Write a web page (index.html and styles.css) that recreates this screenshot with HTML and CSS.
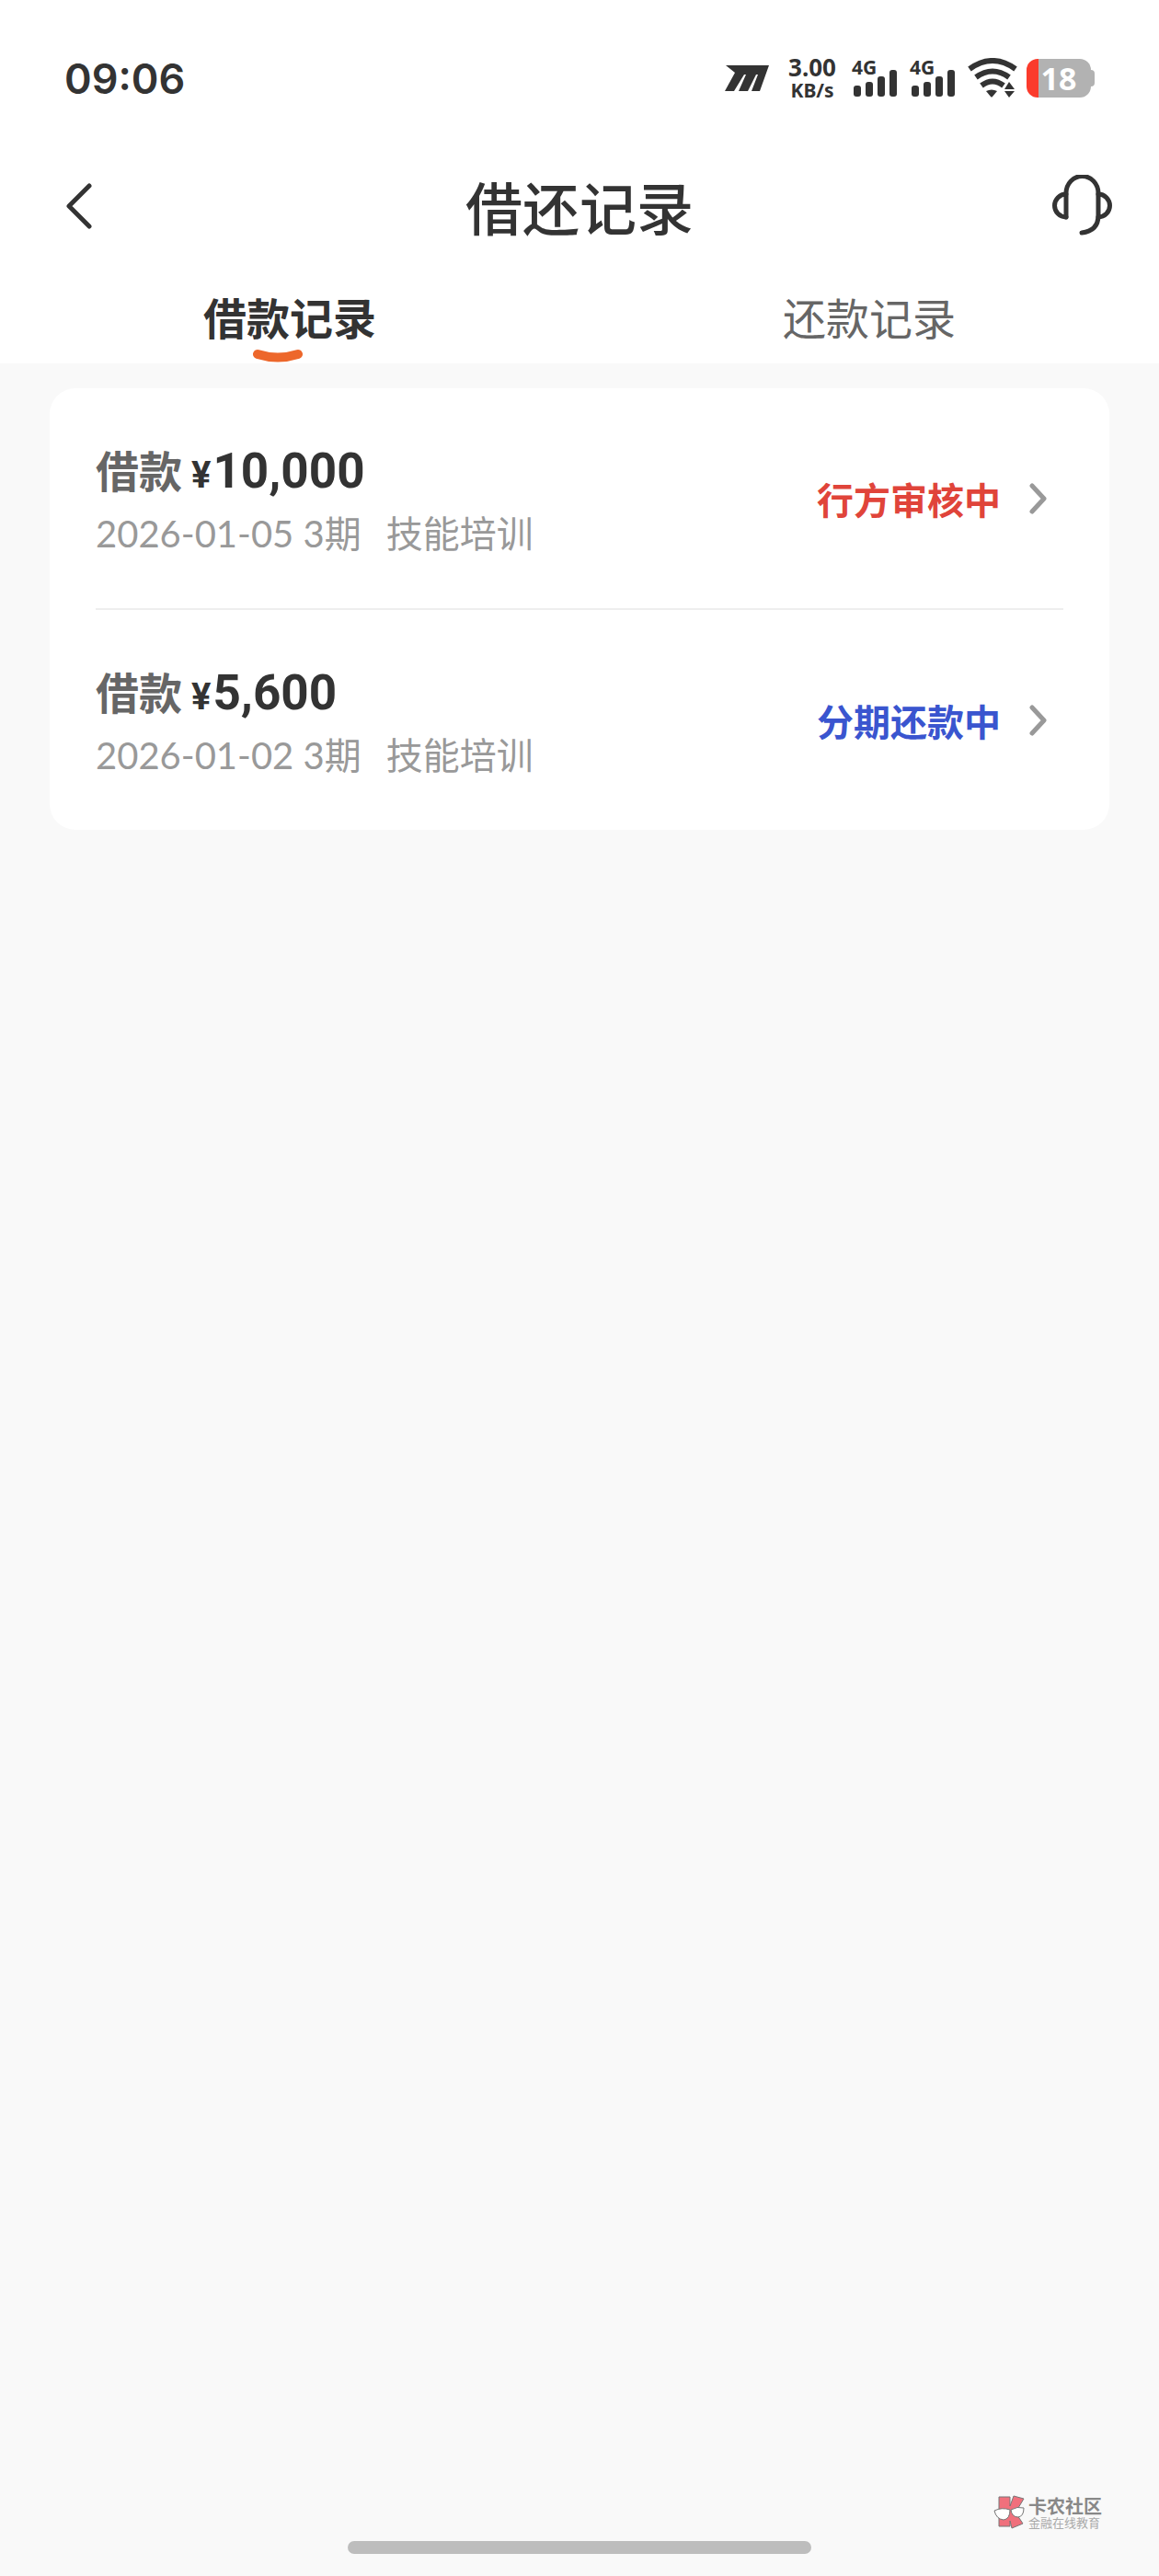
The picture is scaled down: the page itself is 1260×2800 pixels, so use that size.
FILE: index.html
```html
<!DOCTYPE html>
<html lang="zh-CN">
<head>
    <meta charset="UTF-8">
    <meta name="viewport" content="width=device-width, initial-scale=1">
    <title>借还记录</title>
    <link rel="stylesheet" href="styles.css">
</head>
<body>

    <header class="top">
        <div class="status-bar">
            <time class="clock">09:06</time>
            <div class="status-icons">
                <svg class="icon-m" width="50" height="30" viewBox="0 0 50 30">
                    <path d="M2 1H49L39 29H30L37 11H35L26 29H16L24 11H22L11 29H1L12 9Z" fill="#333"/>
                </svg>
                <div class="speed">
                    <span class="speed-num">3.00</span>
                    <span class="speed-unit">KB/s</span>
                </div>
                <div class="signal">
                    <span class="signal-type">4G</span>
                    <svg width="50" height="44" viewBox="0 0 50 44" fill="#333">
                        <rect x="2" y="30" width="8" height="12" rx="3"/>
                        <rect x="15" y="26" width="8" height="16" rx="3"/>
                        <rect x="28" y="20" width="8" height="22" rx="3"/>
                        <rect x="41" y="13" width="8" height="29" rx="3"/>
                    </svg>
                </div>
                <div class="signal">
                    <span class="signal-type">4G</span>
                    <svg width="50" height="44" viewBox="0 0 50 44" fill="#333">
                        <rect x="2" y="30" width="8" height="12" rx="3"/>
                        <rect x="15" y="26" width="8" height="16" rx="3"/>
                        <rect x="28" y="20" width="8" height="22" rx="3"/>
                        <rect x="41" y="13" width="8" height="29" rx="3"/>
                    </svg>
                </div>
                <svg class="icon-wifi" width="54" height="44" viewBox="0 0 54 44">
                    <g fill="none" stroke="#333" stroke-width="6">
                        <path d="M2 12Q27 -6 52 12"/>
                        <path d="M9 21Q27 8 45 21"/>
                        <path d="M15 30Q27 21 39 30"/>
                    </g>
                    <path d="M20 36Q26 33 32 36L27 42Q26 43 25 42Z" fill="#333"/>
                    <path d="M40 34L45 26L51 34ZM40 36H51L45 43Z" fill="#333"/>
                </svg>
                <div class="battery">
                    <span class="battery-body">18</span>
                    <span class="battery-tip"></span>
                </div>
            </div>
        </div>

        <div class="nav-bar">
            <button type="button" class="nav-btn nav-btn-left" aria-label="返回">
                <svg width="30" height="50" viewBox="0 0 30 50">
                    <path d="M27 3L5 25L27 47" fill="none" stroke="#333" stroke-width="5" stroke-linecap="round" stroke-linejoin="round"/>
                </svg>
            </button>
            <h1>借还记录</h1>
            <button type="button" class="nav-btn nav-btn-right" aria-label="客服">
                <svg width="68" height="68" viewBox="0 0 68 68">
                    <g fill="none" stroke="#333" stroke-width="5" stroke-linecap="round" stroke-linejoin="round">
                        <path d="M17 46V20A17 18 0 0 1 52 20V44Q52 61 34 63"/>
                        <path d="M17 21A12 12 0 0 0 17 46"/>
                        <path d="M52 21A12 12 0 0 1 52 46"/>
                    </g>
                </svg>
            </button>
        </div>

        <nav class="tabs">
            <a href="#loans" class="tab active" aria-current="page">借款记录
                <svg class="tab-mark" width="56" height="16" viewBox="0 0 56 16">
                    <path d="M6 6Q28 13 50 6" fill="none" stroke="#ed672b" stroke-width="10" stroke-linecap="round"/>
                </svg>
            </a>
            <a href="#repayments" class="tab">还款记录</a>
        </nav>
    </header>

    <main id="loans" class="card">
        <a href="#loan-1" class="row">
            <div class="info">
                <div class="line"><span class="label">借款</span><span class="yen">¥</span><span class="amount">10,000</span></div>
                <div class="detail"><span>2026-01-05 3期</span><span>技能培训</span></div>
            </div>
            <span class="state reviewing">行方审核中</span>
            <svg class="arrow" width="20" height="36" viewBox="0 0 20 36">
                <path d="M4 4L17 18L4 32" fill="none" stroke="#999" stroke-width="5" stroke-linecap="round" stroke-linejoin="round"/>
            </svg>
        </a>
        <a href="#loan-2" class="row">
            <div class="info">
                <div class="line"><span class="label">借款</span><span class="yen">¥</span><span class="amount">5,600</span></div>
                <div class="detail"><span>2026-01-02 3期</span><span>技能培训</span></div>
            </div>
            <span class="state repaying">分期还款中</span>
            <svg class="arrow" width="20" height="36" viewBox="0 0 20 36">
                <path d="M4 4L17 18L4 32" fill="none" stroke="#999" stroke-width="5" stroke-linecap="round" stroke-linejoin="round"/>
            </svg>
        </a>
    </main>

    <footer>
        <div class="brand">
            <svg width="34" height="38" viewBox="0 0 34 38">
                <g stroke="#777" stroke-width="1">
                    <path d="M6 2H18V12L22 1L33 4L24 19L32 31L20 36L18 28V34H6Z" fill="#f0707c"/>
                    <path d="M1 17Q9 13 18 16Q18 26 11 27Q3 26 1 17Z" fill="#fff"/>
                    <path d="M19 16Q26 12 33 14Q33 23 27 24Q20 24 19 16Z" fill="#fff"/>
                </g>
            </svg>
            <div class="brand-text">
                <strong>卡农社区</strong>
                <small>金融在线教育</small>
            </div>
        </div>
        <div class="home-bar"></div>
    </footer>

</body>
</html>
```
FILE: styles.css
```css
* {
    box-sizing: border-box;
}
body {
    margin: 0;
    min-height: 100vh;
    display: flex;
    flex-direction: column;
    background-color: #f9f9f9;
    color: #333;
    font-family: Lato, "Noto Sans CJK SC", sans-serif;
}
a {
    color: inherit;
    text-decoration: none;
}
svg {
    display: block;
    flex: none;
}
.top {
    background-color: #fff;
}

/* status bar */
.status-bar {
    display: flex;
    justify-content: space-between;
    align-items: center;
    height: 114px;
    padding: 56px 70px 0;
}
.clock {
    font-family: Inter, sans-serif;
    font-size: 45px;
    font-weight: 600;
}
.status-icons {
    display: flex;
    align-items: center;
    font-family: "Noto Sans", sans-serif;
    font-weight: 700;
}
.speed {
    display: flex;
    flex-direction: column;
    align-items: center;
    margin: 0 17px 0 20px;
}
.speed-num {
    font-size: 26px;
    line-height: 26px;
}
.speed-unit {
    font-size: 21px;
    line-height: 24px;
}
.signal {
    position: relative;
    margin-right: 13px;
}
.signal-type {
    position: absolute;
    top: 0;
    left: 0;
    font-size: 21px;
    line-height: 20px;
}
.battery {
    display: flex;
    align-items: center;
    margin-left: 10px;
}
.battery-body {
    width: 70px;
    border-radius: 12px;
    background: linear-gradient(to right, #fb3b2c 13px, #b2b2b2 13px);
    color: #fff;
    font-size: 34px;
    line-height: 42px;
    text-align: center;
}
.battery-tip {
    width: 4px;
    height: 18px;
    border-radius: 0 4px 4px 0;
    background-color: #b2b2b2;
}

/* title bar */
.nav-bar {
    display: grid;
    grid-template-columns: 1fr auto 1fr;
    align-items: center;
    height: 204px;
    padding: 16px 50px 0;
}
h1 {
    margin: 0;
    font-size: 62px;
    font-weight: 500;
}
.nav-btn {
    padding: 0;
    border: none;
    background: none;
    cursor: pointer;
}
.nav-btn-left {
    justify-self: start;
    padding-left: 20px;
}
.nav-btn-right {
    justify-self: end;
}

/* tabs */
.tabs {
    display: grid;
    grid-template-columns: 1fr 1fr;
    justify-items: center;
}
.tab {
    position: relative;
    color: #666;
    font-size: 47px;
    line-height: 56px;
    padding-bottom: 21px;
}
.tab.active {
    color: #333;
    font-weight: 700;
}
.tab-mark {
    position: absolute;
    bottom: 0;
    left: 28%;
}

/* records */
.card {
    margin: 27px 54px;
    padding: 0 50px;
    border-radius: 28px;
    background-color: #fff;
}
.row {
    display: flex;
    align-items: center;
    padding: 54px 18px 54px 0;
}
.row + .row {
    border-top: 2px solid #eee;
}
.info {
    flex: 1;
}
.line {
    display: flex;
    align-items: baseline;
    line-height: 72px;
    font-weight: 700;
}
.label {
    color: #666;
    font-size: 47px;
    margin-right: 10px;
}
.yen,
.amount {
    font-family: Roboto, sans-serif;
}
.yen {
    font-size: 40px;
    margin-right: 2px;
}
.amount {
    font-size: 53px;
}
.detail {
    display: flex;
    gap: 27px;
    color: #999;
    font-size: 40px;
    line-height: 54px;
}
.state {
    font-size: 40px;
    font-weight: 700;
}
.reviewing {
    color: #e0443a;
}
.repaying {
    color: #3a55cf;
}
.arrow {
    margin-left: 30px;
}

/* bottom */
footer {
    margin-top: auto;
    padding-bottom: 24px;
}
.brand {
    display: flex;
    justify-content: flex-end;
    align-items: center;
    gap: 4px;
    padding-right: 62px;
    margin-bottom: 12px;
}
.brand-text {
    display: flex;
    flex-direction: column;
    color: #888;
}
.brand-text strong {
    font-size: 20px;
    line-height: 22px;
}
.brand-text small {
    color: #aaa;
    font-size: 13px;
    line-height: 14px;
}
.home-bar {
    width: 40%;
    height: 14px;
    margin: 0 auto;
    border-radius: 7px;
    background-color: #bdbdbd;
}
```
